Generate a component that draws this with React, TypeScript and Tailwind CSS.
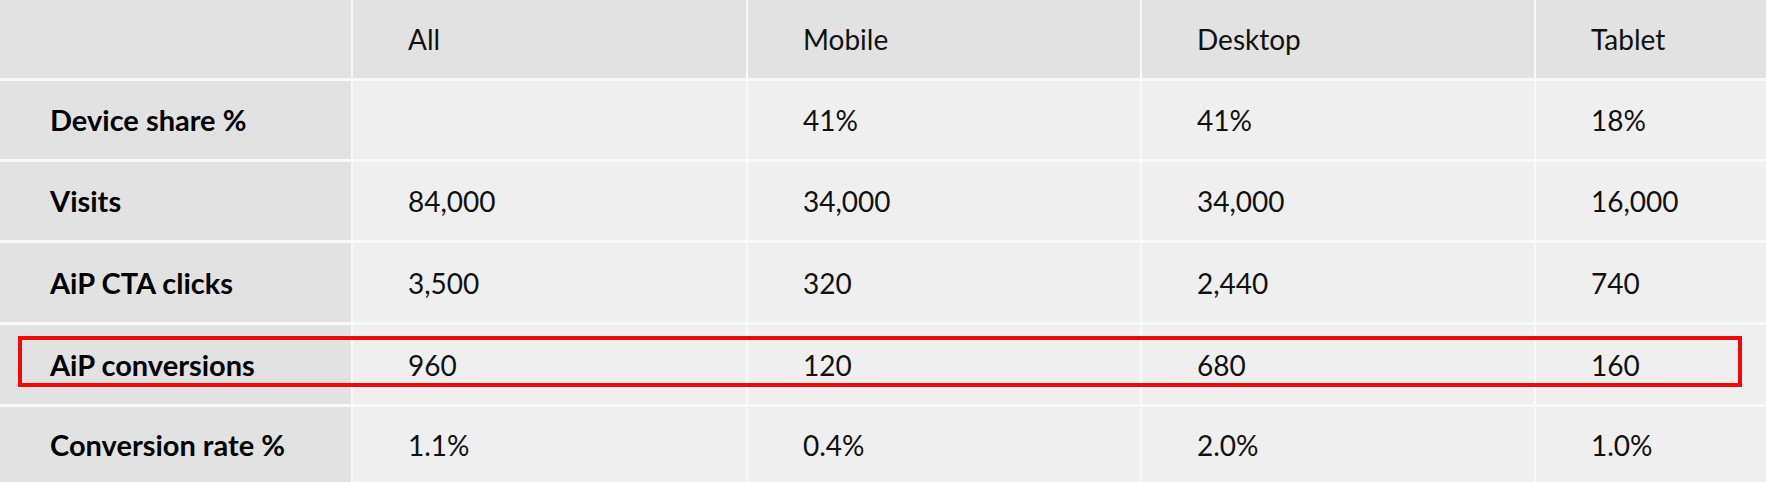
import React from "react";

const header = ["", "All", "Mobile", "Desktop", "Tablet"];
const rows: string[][] = [
  ["Device share %", "", "41%", "41%", "18%"],
  ["Visits", "84,000", "34,000", "34,000", "16,000"],
  ["AiP CTA clicks", "3,500", "320", "2,440", "740"],
  ["AiP conversions", "960", "120", "680", "160"],
  ["Conversion rate %", "1.1%", "0.4%", "2.0%", "1.0%"],
];

export default function App() {
  return (
    <div
      className="relative w-[1766px] h-[482px] bg-[#f9f9f9] overflow-hidden text-[#111] text-[28px]"
      style={{ fontFamily: "Lato, 'Noto Sans', sans-serif" }}
    >
      <div className="grid grid-cols-[351px_393px_392px_392px_230px] grid-rows-[78px_78px_78px_79px_79px_75px] gap-x-[2px] gap-y-[3px] h-full">
        {header.map((h, i) => (
          <div key={"h" + i} className="bg-[#e2e2e2] flex items-center pl-[55px]">
            {h}
          </div>
        ))}
        {rows.map((r, ri) =>
          r.map((c, ci) => (
            <div
              key={ri + "-" + ci}
              className={
                ci === 0
                  ? "bg-[#e2e2e2] flex items-center pl-[50px] font-bold text-[29px] text-black"
                  : "bg-[#efefef] flex items-center pl-[55px]"
              }
            >
              {c}
            </div>
          ))
        )}
      </div>
      <div className="absolute left-[18px] top-[336px] w-[1724px] h-[51px] border-[4px] border-[#ee0a0a]" />
    </div>
  );
}
